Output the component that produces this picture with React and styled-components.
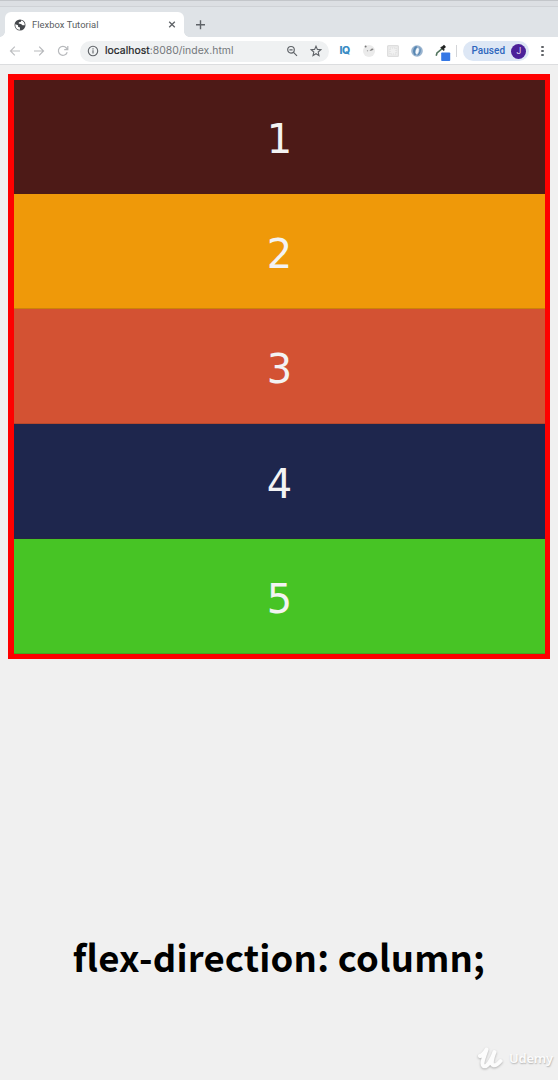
import React from 'react';
import styled, { createGlobalStyle } from 'styled-components';

const GlobalStyle = createGlobalStyle`
  * { box-sizing: border-box; }
  body { margin: 0; background: #f0f0f0; font-family: Roboto, "Liberation Sans", sans-serif; }
`;

const Page = styled.div`
  display: flex;
  flex-direction: column;
  width: 558px;
  height: 1080px;
  overflow: hidden;
  background: #f0f0f0;
`;

const WindowEdge = styled.div`
  height: 7px;
  flex: none;
  background: #dcdfe3;
  border-top: 1px solid #c3c6ca;
  border-bottom: 1px solid #cfd2d6;
`;

const TabStrip = styled.div`
  display: flex;
  align-items: flex-end;
  height: 30px;
  flex: none;
  padding-left: 5px;
  background: #dfe3e7;
`;

const Tab = styled.div`
  position: relative;
  display: flex;
  align-items: center;
  width: 179px;
  height: 25px;
  padding: 0 7px 0 9px;
  border-radius: 6px 6px 0 0;
  background: #fff;
  color: #5a5d61;

  &::before, &::after {
    content: "";
    position: absolute;
    bottom: 0;
    width: 5px;
    height: 5px;
  }
  &::before { left: -5px; background: radial-gradient(circle at 0 0, transparent 4.5px, #fff 5px); }
  &::after { right: -5px; background: radial-gradient(circle at 100% 0, transparent 4.5px, #fff 5px); }
`;

const TabTitle = styled.span`
  flex: 1;
  margin-left: 6px;
  font-size: 9.4px;
  line-height: 12px;
  letter-spacing: 0.04px;
  white-space: nowrap;
`;

const NewTab = styled.div`
  display: flex;
  align-items: center;
  height: 25px;
  margin-left: 10px;
`;

const Toolbar = styled.div`
  display: flex;
  align-items: center;
  height: 28px;
  flex: none;
  padding: 1px 8px 0 9px;
  background: #fff;
  border-bottom: 1px solid #dcdddf;
`;

const NavButtons = styled.div`
  display: flex;
  gap: 12px;
  width: 71px;
`;

const AddressBar = styled.div`
  display: flex;
  align-items: center;
  width: 249px;
  height: 21px;
  padding: 0 7.5px 0 7.4px;
  border-radius: 11px;
  background: #eff1f2;
`;

const Url = styled.span`
  flex: 1;
  margin-left: 5.6px;
  font-family: Inter, "Liberation Sans", sans-serif;
  font-size: 10.4px;
  line-height: 14px;
  letter-spacing: 0.03px;
  white-space: nowrap;
  color: #74787c;
`;

const Host = styled.span`
  color: #202225;
  -webkit-text-stroke: 0.2px #202225;
`;

const AddressActions = styled.div`
  display: flex;
  gap: 12px;
`;

const Extensions = styled.div`
  display: flex;
  align-items: center;
  gap: 12px;
  margin-left: 10.4px;
`;

const IqMark = styled.span`
  width: 12px;
  font: 800 10.5px/12px Inter, sans-serif;
  letter-spacing: -0.3px;
  color: #388bc4;
`;

const Divider = styled.div`
  width: 1px;
  height: 12px;
  margin-left: 5px;
  background: #d3d5d8;
`;

const ProfileChip = styled.div`
  display: flex;
  align-items: center;
  justify-content: space-between;
  width: 66px;
  height: 20px;
  margin-left: 6px;
  padding: 0 3px 0 8px;
  border-radius: 10px;
  background: #dde7f5;
  font: 500 10px/12px Roboto, sans-serif;
  letter-spacing: 0.05px;
  color: #2e66bd;
`;

const Avatar = styled.span`
  display: flex;
  align-items: center;
  justify-content: center;
  width: 15px;
  height: 15px;
  border-radius: 50%;
  background: #4b2199;
  color: #e2d9f2;
  font-size: 8.5px;
  font-weight: 400;
`;

const MenuDots = styled.div`
  display: flex;
  flex-direction: column;
  gap: 1.7px;
  margin-left: 12px;
`;

const Dot = styled.i`
  width: 2.3px;
  height: 2.3px;
  border-radius: 50%;
  background: #606367;
`;

const FlexContainer = styled.main`
  display: flex;
  flex-direction: column;
  flex: none;
  width: 542.3px;
  height: 585.5px;
  margin: 8.6px 0 0 8.2px;
  padding: 6px 5.3px 5.2px 5.8px;
  background: #fe0000;
`;

const FlexItem = styled.div`
  display: flex;
  align-items: center;
  justify-content: center;
  flex: 1;
  padding-top: 4.5px;
  background: ${(p) => p.$color};
  box-shadow: inset 0 -1px 0 rgba(70, 40, 20, 0.2);
  color: #f3f3f3;
  font: 40px/48px "DejaVu Sans", sans-serif;
`;

const Caption = styled.p`
  margin: 269px 0 0;
  text-align: center;
  font: 700 36.5px/58px "Noto Sans CJK SC", sans-serif;
  letter-spacing: 0.18px;
  white-space: nowrap;
  color: #000;
`;

const Watermark = styled.footer`
  display: flex;
  align-items: center;
  align-self: flex-end;
  gap: 5px;
  margin: auto 5px 10px 0;
  color: #fbfbfb;
  font: 600 13px/20px "Noto Sans", sans-serif;
  letter-spacing: -0.2px;
  text-shadow: 0.5px 1px 1.5px #b0b0b0;

  svg { filter: drop-shadow(0.5px 1px 1px #b0b0b0); }
`;

const Stroke = styled.svg`
  flex: none;
  display: block;
  fill: none;
  stroke: ${(p) => p.$color || '#5f6368'};
  stroke-width: ${(p) => p.$weight || 1.2};
`;

const Globe = () => (
  <Stroke width="12" height="12" viewBox="0 0 12 12" $color="none">
    <circle cx="6" cy="6" r="5.5" fill="#44474b" />
    <path d="M1.3 5.2 4 6.2l.2 1.7 1.6.4.3 2.5C3.4 11 1.3 9 1.3 6ZM7 1.4 6.8 3 4.9 3.3l-.2 1.2L7 4.9l1.5 1.3h2.2C11 4 9.5 1.8 7 1.4Z" fill="#fff" />
  </Stroke>
);

const Arrow = ({ flip }) => (
  <Stroke width="12" height="12" viewBox="0 0 12 12" $color={flip ? '#b7b9bc' : '#bdbfc1'}>
    <path d={flip ? 'M1 6h9.5M6.2 1.7 10.5 6l-4.3 4.3' : 'M11 6H1.5M5.8 1.7 1.5 6l4.3 4.3'} />
  </Stroke>
);

const Reload = () => (
  <Stroke width="12" height="12" viewBox="0 0 12 12" $color="#b7b9bc">
    <path d="M10.2 7.2A4.5 4.5 0 1 1 9.4 3L10.7 4.4M10.8 1v3.6H7.2" />
  </Stroke>
);

const ITEMS = ['#4d1a17', '#ef9909', '#d35233', '#1e264d', '#47c425'];

export default function App() {
  return (
    <Page>
      <GlobalStyle />
      <WindowEdge />
      <TabStrip>
        <Tab>
          <Globe />
          <TabTitle>Flexbox Tutorial</TabTitle>
          <Stroke width="10" height="10" viewBox="0 0 10 10" $weight={1.3}>
            <path d="m2.2 1.7 5.6 5.6m0-5.6L2.2 7.3" />
          </Stroke>
        </Tab>
        <NewTab>
          <Stroke width="12" height="12" viewBox="0 0 12 12" $weight={1.4}>
            <path d="M6.5 1.2v9M2 5.7h9" />
          </Stroke>
        </NewTab>
      </TabStrip>
      <Toolbar>
        <NavButtons>
          <Arrow />
          <Arrow flip />
          <Reload />
        </NavButtons>
        <AddressBar>
          <Stroke width="12" height="12" viewBox="0 0 12 12" $weight={1.1}>
            <circle cx="6" cy="6" r="4.7" />
            <path d="M6 5.3v3.3M6 3.3v1.2" />
          </Stroke>
          <Url><Host>localhost</Host>:8080/index.html</Url>
          <AddressActions>
            <Stroke width="12" height="12" viewBox="0 0 12 12">
              <circle cx="5" cy="4.8" r="3.3" />
              <path d="m7.5 7.3 3.5 3.5M3.4 4.8h3.2" />
            </Stroke>
            <Stroke width="12" height="12" viewBox="0 0 12 12" $weight={1.1}>
              <path d="m6 1.2 1.4 3.2 3.5.3-2.7 2.3.8 3.5L6 8.7l-3 1.8.8-3.5-2.7-2.3 3.5-.3Z" />
            </Stroke>
          </AddressActions>
        </AddressBar>
        <Extensions>
          <IqMark>IQ</IqMark>
          <Stroke width="12" height="12" viewBox="0 0 12 12" $color="none">
            <circle cx="6" cy="6" r="6" fill="#ebebeb" />
            <circle cx="2.6" cy="1.6" r="1" fill="#777" />
            <path d="m6.5 6 1.8-2.2 1.7-.4.5 1.2-1.5 1Z" fill="#858585" />
            <circle cx="4.5" cy="5.7" r=".7" fill="#aaa" />
          </Stroke>
          <Stroke width="12" height="12" viewBox="0 0 12 12" $color="#dedede">
            <rect x=".6" y=".6" width="10.8" height="10.8" rx="1" fill="#ececec" />
            <rect x="3" y="3" width="6" height="6" fill="#f1f1f1" strokeDasharray="1 1" />
          </Stroke>
          <Stroke width="12" height="12" viewBox="0 0 12 12" $color="none">
            <circle cx="6" cy="6" r="5.8" fill="#9ab4cf" />
            <path d="M5 1C2 3 1 7 3.7 10.3L5 10C3.8 7.5 4 4 6.4 2ZM8.4 1.8C9.3 5 8.6 8 6 10.8c3.3-.5 5-5.5 2.4-9Z" fill="#5686b2" />
            <ellipse cx="6.2" cy="6" rx="1.5" ry="3.1" transform="rotate(15 6 6)" fill="#f6fafe" />
          </Stroke>
          <Stroke width="16" height="20" viewBox="0 0 16 20" $color="#333">
            <path d="m1.2 14.8.8-2.8 5.5-4.7" strokeWidth="1.6" stroke="#52745e" />
            <path d="m5.8 6.2 3.5 3.2" strokeWidth="1.6" />
            <path d="m7.2 7.3 2.8-2.5" strokeWidth="3" stroke="#202222" />
            <rect x="6.2" y="11.5" width="9" height="8.5" rx=".8" fill="#3578e5" stroke="none" />
          </Stroke>
        </Extensions>
        <Divider />
        <ProfileChip>Paused<Avatar>J</Avatar></ProfileChip>
        <MenuDots><Dot /><Dot /><Dot /></MenuDots>
      </Toolbar>
      <FlexContainer>
        {ITEMS.map((color, i) => <FlexItem key={color} $color={color}>{i + 1}</FlexItem>)}
      </FlexContainer>
      <Caption>flex-direction: column;</Caption>
      <Watermark>
        <Stroke width="27" height="24" viewBox="0 0 27 24" $color="#fcfcfc" $weight={4} strokeLinecap="round" strokeLinejoin="round">
          <path d="M3 10C6 9 8 6 9.5 3.5 8 9 3.5 18 6.5 20c3.5 2 8-6 11-14-2 5-4 12-1.5 13 2 1 5-1 7.5-4" />
        </Stroke>
        Udemy
      </Watermark>
    </Page>
  );
}
